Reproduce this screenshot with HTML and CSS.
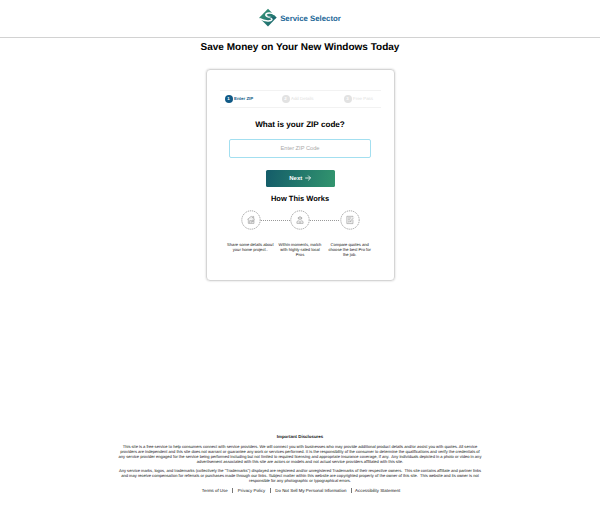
FILE: index.html
```html
<!DOCTYPE html>
<html lang="en">
<head>
<meta charset="utf-8">
<title>Service Selector</title>
<link rel="stylesheet" href="styles.css">
</head>
<body>
<header class="header">
  <svg class="logo" viewBox="0 0 20 20">
    <defs><linearGradient id="mark" x1="0" y1="0" x2="1" y2="1"><stop offset="0" stop-color="#3a9a78"/><stop offset="1" stop-color="#17616d"/></linearGradient></defs>
    <path d="M10 .8 18.6 9.6 10 18.6 1.2 9.8Z" fill="url(#mark)"/>
    <path d="M16.5 6.6C13 4.2 8 4.7 7.8 7 7.6 9.2 14 8.6 14 11 14 13.8 7 13.4 1.8 10.6" fill="none" stroke="#fff" stroke-width="1.5"/>
    <path d="M9 8.2C12 9.3 15 9 18.8 9.8 16 10.8 15.2 11 14.4 10.6 13.8 9.4 11 9.4 9 8.2Z" fill="#17616d"/>
  </svg>
  <span class="brand">Service Selector</span>
</header>
<main class="main">
  <h1 class="title">Save Money on Your New Windows Today</h1>
  <section class="card">
    <div class="steps">
      <div class="step active"><span class="num">1</span>Enter ZIP</div>
      <div class="step second"><span class="num">2</span>Add Details</div>
      <div class="step third"><span class="num">3</span>Free Pass</div>
    </div>
    <h2 class="question">What is your ZIP code?</h2>
    <input class="zip" type="text" placeholder="Enter ZIP Code">
    <button class="next">Next
      <svg class="arrow" viewBox="0 0 6 6"><path d="M.2 3H5.5M3.2.6 5.6 3 3.2 5.4" fill="none" stroke="#fff" stroke-width=".8"/></svg>
    </button>
    <h2 class="how">How This Works</h2>
    <div class="flow">
      <svg class="ring" viewBox="0 0 20 20"><circle class="dash" cx="10" cy="10" r="9.2"/><path class="glyph" d="M6.4 9.4 10.2 6.3 13.7 9.2M7.3 9V13.4H13V9M11.7 7.4V6.4H12.7V8.3M8.7 13.2V10.7H10.2V13.2M11 10.2H12.3V11.6H11Z"/></svg>
      <span class="link"></span>
      <svg class="ring" viewBox="0 0 20 20"><circle class="dash" cx="10" cy="10" r="9.2"/><path class="glyph" d="M8.4 9V7.6Q10 5.4 11.6 7.6V9Q10 11.3 8.4 9M7.8 8H12.2M6.9 13.4V11.6L8.4 10.6 10 12.3 11.6 10.6 13.1 11.6V13.4ZM10 12.3V13.4"/></svg>
      <span class="link"></span>
      <svg class="ring" viewBox="0 0 20 20"><circle class="dash" cx="10" cy="10" r="9.2"/><path class="glyph" d="M13 9.8V13.6H6.8V6.3H13V7.3M8 8H11M8 9.8H10M8 11.8H9.3M9.8 11.7 13.7 7.8M9.8 11.7 11.4 11.2"/></svg>
    </div>
    <div class="captions">
      <p>Share some details about<br>your home project..</p>
      <p>Within moments, match<br>with highly-rated local<br>Pros</p>
      <p>Compare quotes and<br>choose the best Pro for<br>the job.</p>
    </div>
  </section>
</main>
<footer class="footer">
  <h3>Important Disclosures</h3>
  <p>This site is a free service to help consumers connect with service providers. We will connect you with businesses who may provide additional product details and/or assist you with quotes. All service<br>providers are independent and this site does not warrant or guarantee any work or services performed. It is the responsibility of the consumer to determine the qualifications and verify the credentials of<br>any service provider engaged for the service being performed including but not limited to required licensing and appropriate insurance coverage, if any.&nbsp; Any individuals depicted in a photo or video in any<br>advertisement associated with this site are actors or models and not actual service providers affiliated with this site.</p>
  <p>Any service marks, logos, and trademarks (collectively the "Trademarks") displayed are registered and/or unregistered Trademarks of their respective owners.&nbsp; This site contains affiliate and partner links<br>and may receive compensation for referrals or purchases made through our links. Subject matter within this website are copyrighted property of the owner of this site.&nbsp; This website and its owner is not<br>responsible for any photographic or typographical errors.</p>
  <nav class="links"><a>Terms of Use</a><a>Privacy Policy</a><a>Do Not Sell My Personal Information</a><a>Accessibility Statement</a></nav>
</footer>
</body>
</html>
```

FILE: styles.css
```css
* { box-sizing: border-box; }
body { margin: 0; height: 506px; overflow: hidden; display: flex; flex-direction: column; background: #fff; color: #000; font-family: "Liberation Sans", Arial, sans-serif; text-rendering: geometricPrecision; }
h1, h2, h3, p { margin: 0; }
.header { height: 38px; flex: none; display: flex; align-items: center; justify-content: center; gap: 2px; border-bottom: 1px solid #d2d2d2; }
.logo { width: 20px; height: 20px; margin-top: -1px; margin-left: -1px; }
.brand { font-size: 7.8px; font-weight: bold; color: #1c6797; white-space: nowrap; }
.main { display: flex; flex-direction: column; align-items: center; }
.title { font-size: 10px; line-height: 12px; margin-top: 3.5px; white-space: nowrap; }
.card { width: 189px; height: 212px; margin-top: 15.5px; padding: 20px 14px 0; border: 1px solid #d5d5d5; border-radius: 4px; box-shadow: 0 0 2px #c9c9c9; display: flex; flex-direction: column; align-items: center; }
.steps { width: 161px; height: 18px; flex: none; display: flex; align-items: center; border-top: 1px solid #f2f2f2; border-bottom: 1px solid #f2f2f2; padding: 0 0 1px 5px; }
.step { display: flex; align-items: center; gap: 1.5px; font-size: 4.4px; color: #dedede; white-space: nowrap; }
.second { width: 62px; }
.num { width: 8px; height: 8px; border-radius: 50%; background: #e2e2e2; color: #fff; display: flex; align-items: center; justify-content: center; font-weight: bold; }
.active { width: 57px; color: #155e89; font-weight: bold; }
.active .num { background: #115a86; }
.question { font-size: 8.15px; line-height: 10px; margin-top: 12px; white-space: nowrap; }
.zip { width: 142px; height: 19px; flex: none; margin-top: 9px; padding: 0 0 2px; border: 1px solid #a3dff0; border-radius: 2px; text-align: center; font: 5.7px "Liberation Sans", Arial, sans-serif; }
.zip::placeholder { color: #aaa; }
.next { width: 69px; height: 17px; flex: none; margin-top: 12px; padding: 0 0 1px; border: 0; border-radius: 1.5px; background: linear-gradient(100deg, #145c69, #32956e); color: #fff; font: bold 6px "Liberation Sans", Arial, sans-serif; display: flex; align-items: center; justify-content: center; gap: 2.5px; }
.arrow { width: 6px; height: 6px; }
.how { font-size: 7.5px; line-height: 9px; margin-top: 7px; white-space: nowrap; }
.flow { display: flex; align-items: center; margin-top: 7px; }
.ring { width: 20px; height: 20px; }
.dash { fill: none; stroke: #858585; stroke-width: .75; stroke-dasharray: 1.2 .8; }
.glyph { fill: #eee; stroke: #888; stroke-width: .5; }
.link { width: 29.5px; height: 1px; background: repeating-linear-gradient(90deg, #999 0 1px, transparent 1px 2px); }
.captions { width: 149px; margin-top: 11.5px; display: grid; grid-template-columns: repeat(3, 1fr); text-align: center; font-size: 4.1px; line-height: 5px; color: #111; white-space: nowrap; }
.captions p { justify-self: center; }
.footer { margin-top: auto; height: 72px; flex: none; text-align: center; color: #111; font-size: 4.07px; line-height: 4.95px; white-space: nowrap; }
.footer h3 { font-size: 4.4px; line-height: 5px; margin-bottom: 6px; }
.footer p { margin-bottom: 4px; }
.links { display: flex; justify-content: center; align-items: center; font-size: 4.4px; line-height: 5px; padding-left: 2px; }
.links a + a { border-left: 1px solid #777; padding-left: 4.5px; margin-left: 4.7px; }
.links a:last-child { padding-left: 3px; }
```
